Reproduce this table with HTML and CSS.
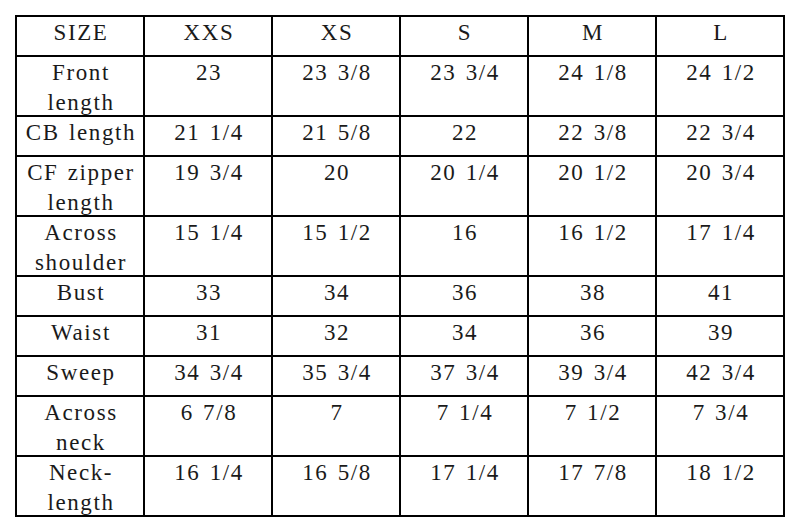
FILE: index.html
```html
<!DOCTYPE html>
<html>
<head>
<meta charset="utf-8">
<link rel="stylesheet" href="styles.css">
</head>
<body>
<div class="sheet">
  <div class="cell h1">SIZE</div><div class="cell h1">XXS</div><div class="cell h1">XS</div><div class="cell h1">S</div><div class="cell h1">M</div><div class="cell h1">L</div>
  <div class="cell h2">Front length</div><div class="cell h2">23</div><div class="cell h2">23 3/8</div><div class="cell h2">23 3/4</div><div class="cell h2">24 1/8</div><div class="cell h2">24 1/2</div>
  <div class="cell h1">CB length</div><div class="cell h1">21 1/4</div><div class="cell h1">21 5/8</div><div class="cell h1">22</div><div class="cell h1">22 3/8</div><div class="cell h1">22 3/4</div>
  <div class="cell h2">CF zipper length</div><div class="cell h2">19 3/4</div><div class="cell h2">20</div><div class="cell h2">20 1/4</div><div class="cell h2">20 1/2</div><div class="cell h2">20 3/4</div>
  <div class="cell h2">Across shoulder</div><div class="cell h2">15 1/4</div><div class="cell h2">15 1/2</div><div class="cell h2">16</div><div class="cell h2">16 1/2</div><div class="cell h2">17 1/4</div>
  <div class="cell h1">Bust</div><div class="cell h1">33</div><div class="cell h1">34</div><div class="cell h1">36</div><div class="cell h1">38</div><div class="cell h1">41</div>
  <div class="cell h1">Waist</div><div class="cell h1">31</div><div class="cell h1">32</div><div class="cell h1">34</div><div class="cell h1">36</div><div class="cell h1">39</div>
  <div class="cell h1">Sweep</div><div class="cell h1">34 3/4</div><div class="cell h1">35 3/4</div><div class="cell h1">37 3/4</div><div class="cell h1">39 3/4</div><div class="cell h1">42 3/4</div>
  <div class="cell h2">Across neck</div><div class="cell h2">6 7/8</div><div class="cell h2">7</div><div class="cell h2">7 1/4</div><div class="cell h2">7 1/2</div><div class="cell h2">7 3/4</div>
  <div class="cell h2">Neck-length</div><div class="cell h2">16 1/4</div><div class="cell h2">16 5/8</div><div class="cell h2">17 1/4</div><div class="cell h2">17 7/8</div><div class="cell h2">18 1/2</div>
</div>
</body>
</html>
```
FILE: styles.css
```css
html, body {
  margin: 0;
  padding: 0;
  background: #ffffff;
}
body {
  padding: 15px 0 0 15px;
}
.sheet {
  display: grid;
  grid-template-columns: repeat(6, 128px);
  width: 770px;
  box-sizing: border-box;
  border-left: 2px solid #000;
  border-top: 2px solid #000;
  font-family: "Liberation Serif", "DejaVu Serif", serif;
  font-size: 23px;
  letter-spacing: 1.6px;
  word-spacing: 2px;
  line-height: 30px;
  color: #1a1a1a;
}
.cell {
  box-sizing: border-box;
  border-right: 2px solid #000;
  border-bottom: 2px solid #000;
  text-align: center;
  padding: 1px 2px 0 4px;
}
.h1 { height: 40px; }
.h2 { height: 60px; }
```
